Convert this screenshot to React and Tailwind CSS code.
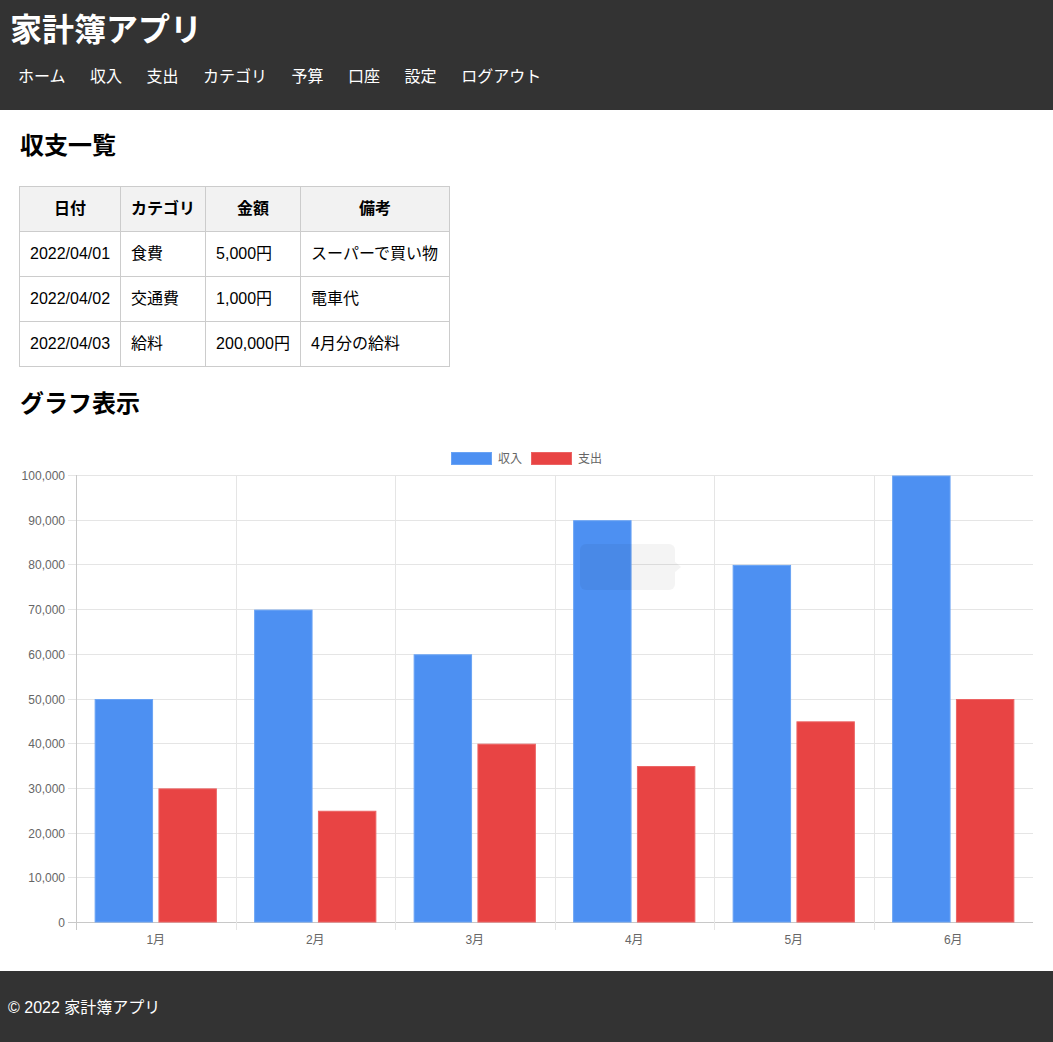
import React from "react";

const font = { fontFamily: '"Liberation Sans", "Noto Sans CJK JP", sans-serif' };

const navItems = ["ホーム", "収入", "支出", "カテゴリ", "予算", "口座", "設定", "ログアウト"];

const rows = [
  { date: "2022/04/01", cat: "食費", amount: "5,000円", note: "スーパーで買い物" },
  { date: "2022/04/02", cat: "交通費", amount: "1,000円", note: "電車代" },
  { date: "2022/04/03", cat: "給料", amount: "200,000円", note: "4月分の給料" },
];

const months = ["1月", "2月", "3月", "4月", "5月", "6月"];
const income = [50000, 70000, 60000, 90000, 80000, 100000];
const expense = [30000, 25000, 40000, 35000, 45000, 50000];

// chart geometry (svg coords)
const W = 1013;
const H = 511;
const left = 56;
const right = 1013;
const top = 35;
const zero = 482;
const catW = (right - left) / 6;
const slot = (catW * 0.8) / 2;
const barW = slot * 0.9;
const yOf = (v) => zero - ((zero - top) * v) / 100000;

const BarChart = () => {
  const ticks = [0, 10000, 20000, 30000, 40000, 50000, 60000, 70000, 80000, 90000, 100000];
  return (
    <svg viewBox={`0 0 ${W} ${H}`} width={W} height={H} className="block" style={font}>
      {/* legend */}
      <rect x="431.5" y="12.5" width="40" height="12" fill="#4d90f2" stroke="#6aa3f4" />
      <text x="478" y="22.5" fontSize="12" fill="#666">収入</text>
      <rect x="511.5" y="12.5" width="40" height="12" fill="#e84444" stroke="#ec6363" />
      <text x="558" y="22.5" fontSize="12" fill="#666">支出</text>

      {/* horizontal grid + y labels */}
      {ticks.map((t) => {
        const y = Math.round(yOf(t)) + 0.5;
        return (
          <g key={t}>
            <line x1="48" x2={right} y1={y} y2={y} stroke={t === 0 ? "#c8c8c8" : "#e5e5e5"} />
            <text x="45" y={y + 4} fontSize="12" fill="#666" textAnchor="end">
              {t.toLocaleString("en-US")}
            </text>
          </g>
        );
      })}

      {/* vertical grid */}
      {[0, 1, 2, 3, 4, 5, 6].map((i) => {
        const x = Math.round(left + i * catW) + 0.5;
        return (
          <line
            key={i}
            x1={x}
            x2={x}
            y1={top}
            y2="490"
            stroke={i === 0 ? "#c8c8c8" : "#e5e5e5"}
          />
        );
      })}

      {/* bars */}
      {months.map((m, i) => {
        const bx = left + i * catW + catW * 0.1 + slot * 0.05;
        const rx = bx + slot;
        return (
          <g key={m}>
            <rect
              x={bx}
              y={yOf(income[i]) + 1}
              width={barW}
              height={zero - yOf(income[i]) - 1}
              fill="#4d90f2"
              stroke="#6aa3f4"
              strokeWidth="1"
            />
            <rect
              x={rx}
              y={yOf(expense[i]) + 1}
              width={barW}
              height={zero - yOf(expense[i]) - 1}
              fill="#e84444"
              stroke="#ec6363"
              strokeWidth="1"
            />
            <text x={left + i * catW + catW / 2} y="504" fontSize="12" fill="#666" textAnchor="middle">
              {m}
            </text>
          </g>
        );
      })}

      {/* fading tooltip */}
      <g opacity="0.04">
        <rect x="560" y="104" width="95" height="46" rx="6" fill="#000" />
        <polygon points="655,122 661,127 655,132" fill="#000" />
        <text x="566" y="121" fontSize="12" fontWeight="bold" fill="#000">4月</text>
        <rect x="566" y="132" width="10" height="10" fill="#000" />
        <text x="580" y="141" fontSize="12" fill="#000">収入: 90,000</text>
      </g>
    </svg>
  );
};

export default function App() {
  return (
    <div className="min-h-screen bg-white text-black" style={font}>
      {/* Header */}
      <header className="bg-[#333] text-white h-[110px] px-[10px] pt-[10px]">
        <h1 className="text-[32px] leading-[40px] font-bold">家計簿アプリ</h1>
        <nav className="mt-[15px]">
          <ul className="flex gap-[8.5px]">
            {navItems.map((item) => (
              <li key={item} className="px-2 text-[16px] leading-[24px]">
                {item}
              </li>
            ))}
          </ul>
        </nav>
      </header>

      {/* Main */}
      <main className="px-[20px] pt-[20px] pb-[20px]">
        <h2 className="text-[24px] leading-[32px] font-bold mb-[24px]">収支一覧</h2>
        <table className="border-collapse text-[16px] -ml-px">
          <thead>
            <tr className="bg-[#f2f2f2]">
              <th className="border border-[#ccc] px-[10px] h-[45px] w-[101px] font-bold">日付</th>
              <th className="border border-[#ccc] px-[10px] h-[45px] w-[85px] font-bold">カテゴリ</th>
              <th className="border border-[#ccc] px-[10px] h-[45px] w-[95px] font-bold">金額</th>
              <th className="border border-[#ccc] px-[10px] h-[45px] w-[149px] font-bold">備考</th>
            </tr>
          </thead>
          <tbody>
            {rows.map((r) => (
              <tr key={r.date}>
                <td className="border border-[#ccc] px-[10px] h-[45px] whitespace-nowrap">{r.date}</td>
                <td className="border border-[#ccc] px-[10px] h-[45px] whitespace-nowrap">{r.cat}</td>
                <td className="border border-[#ccc] px-[10px] h-[45px] whitespace-nowrap">{r.amount}</td>
                <td className="border border-[#ccc] px-[10px] h-[45px] whitespace-nowrap">{r.note}</td>
              </tr>
            ))}
          </tbody>
        </table>

        <h2 className="text-[24px] leading-[32px] font-bold mt-[21px] mb-[20px]">グラフ表示</h2>
        <BarChart />
      </main>

      {/* Footer */}
      <footer className="bg-[#333] text-white h-[71px] px-2 flex items-center pt-[3px]">
        <p className="text-[16px]">© 2022 家計簿アプリ</p>
      </footer>
    </div>
  );
}
